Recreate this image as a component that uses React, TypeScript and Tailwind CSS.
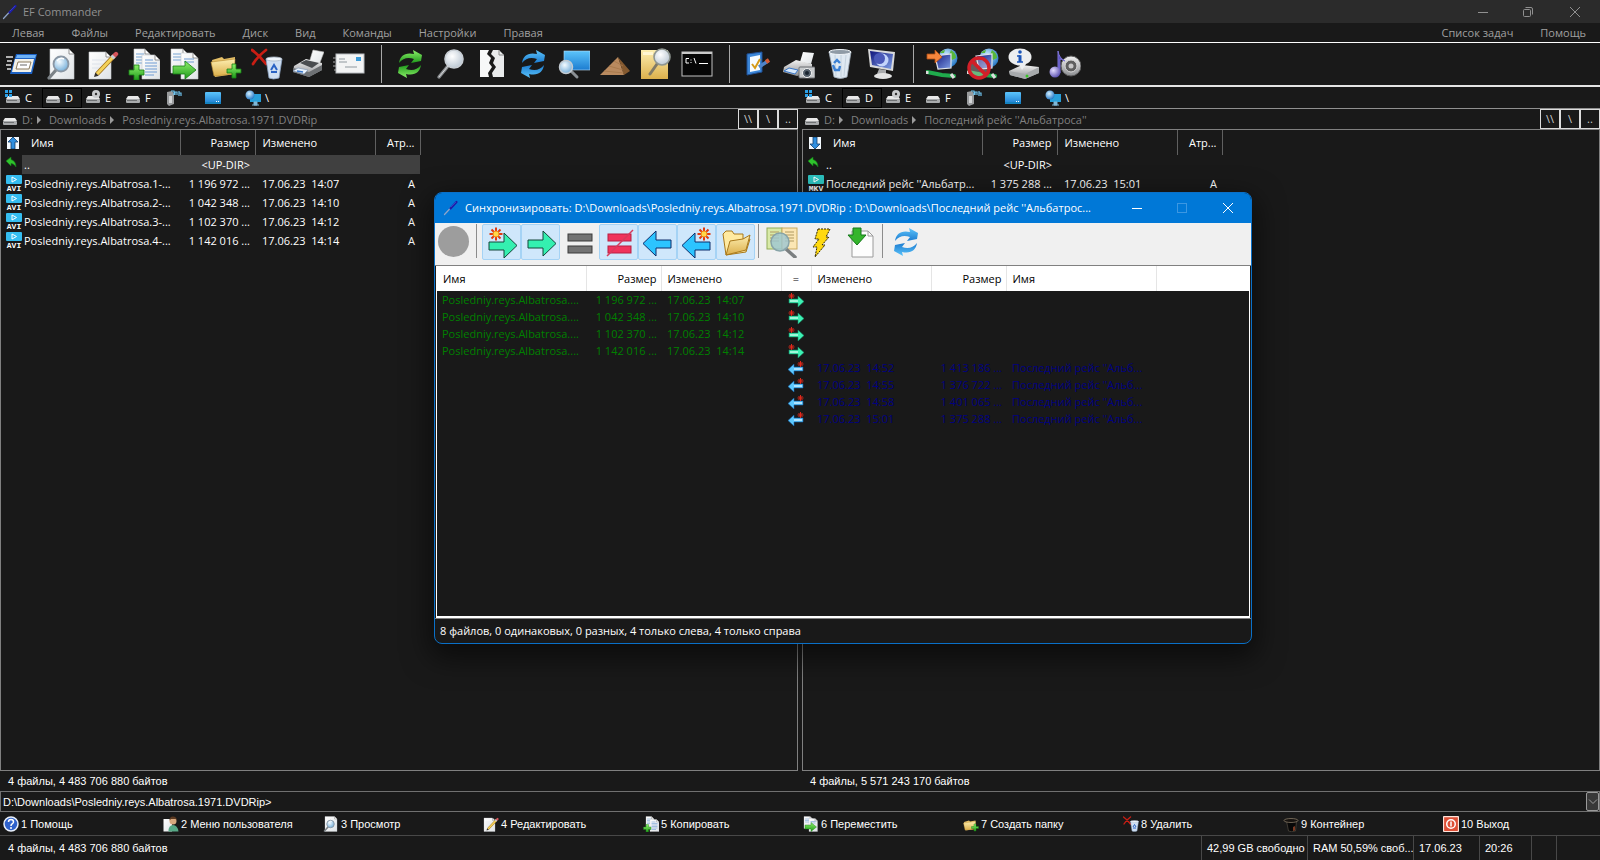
import React from 'react';

type Icon = () => React.ReactElement;

interface FileRow {
  name: string;
  size: string;
  date: string;
}

const leftFiles: FileRow[] = [
  { name: 'Posledniy.reys.Albatrosa.1-...', size: '1 196 972 ...', date: '17.06.23  14:07' },
  { name: 'Posledniy.reys.Albatrosa.2-...', size: '1 042 348 ...', date: '17.06.23  14:10' },
  { name: 'Posledniy.reys.Albatrosa.3-...', size: '1 102 370 ...', date: '17.06.23  14:12' },
  { name: 'Posledniy.reys.Albatrosa.4-...', size: '1 142 016 ...', date: '17.06.23  14:14' },
];

const rightFiles: FileRow[] = [
  { name: "Последний рейс ''Альбатр...", size: '1 375 288 ...', date: '17.06.23  15:01' },
];

const syncLeft: FileRow[] = [
  { name: 'Posledniy.reys.Albatrosa....', size: '1 196 972 ...', date: '17.06.23  14:07' },
  { name: 'Posledniy.reys.Albatrosa....', size: '1 042 348 ...', date: '17.06.23  14:10' },
  { name: 'Posledniy.reys.Albatrosa....', size: '1 102 370 ...', date: '17.06.23  14:12' },
  { name: 'Posledniy.reys.Albatrosa....', size: '1 142 016 ...', date: '17.06.23  14:14' },
];

const syncRight: FileRow[] = [
  { name: "Последний рейс ''Альб...", size: '1 413 186 ...', date: '17.06.23  14:52' },
  { name: "Последний рейс ''Альб...", size: '1 376 722 ...', date: '17.06.23  14:55' },
  { name: "Последний рейс ''Альб...", size: '1 401 065 ...', date: '17.06.23  14:58' },
  { name: "Последний рейс ''Альб...", size: '1 375 288 ...', date: '17.06.23  15:01' },
];

// Gradients shared by every icon
const Gradients = () => (
  <svg className="absolute h-0 w-0" aria-hidden="true">
    <defs>
      <linearGradient id="paper" x1="0" y1="0" x2="1" y2="1">
        <stop offset="0" stopColor="#ffffff" />
        <stop offset="1" stopColor="#dfe3e6" />
      </linearGradient>
      <linearGradient id="green" x1="0" y1="0" x2="0" y2="1">
        <stop offset="0" stopColor="#8df06a" />
        <stop offset="1" stopColor="#1f9a1b" />
      </linearGradient>
      <linearGradient id="blue" x1="0" y1="0" x2="0" y2="1">
        <stop offset="0" stopColor="#5cc4fb" />
        <stop offset="1" stopColor="#1c7cd0" />
      </linearGradient>
      <linearGradient id="folder" x1="0" y1="0" x2="0" y2="1">
        <stop offset="0" stopColor="#fdeeb0" />
        <stop offset="1" stopColor="#dcb04c" />
      </linearGradient>
      <linearGradient id="metal" x1="0" y1="0" x2="0" y2="1">
        <stop offset="0" stopColor="#f2f2f2" />
        <stop offset="1" stopColor="#8b8d90" />
      </linearGradient>
      <linearGradient id="night" x1="0" y1="0" x2="1" y2="1">
        <stop offset="0" stopColor="#10157c" />
        <stop offset="1" stopColor="#7f9fe6" />
      </linearGradient>
      <radialGradient id="lens" cx="0.4" cy="0.35" r="0.7">
        <stop offset="0" stopColor="#f4fbff" />
        <stop offset="1" stopColor="#6fabd8" />
      </radialGradient>
      <radialGradient id="glass" cx="0.4" cy="0.35" r="0.7">
        <stop offset="0" stopColor="#ffffff" />
        <stop offset="1" stopColor="#b9c6d2" />
      </radialGradient>
      <radialGradient id="globe" cx="0.4" cy="0.35" r="0.7">
        <stop offset="0" stopColor="#d3efff" />
        <stop offset="1" stopColor="#1e73c4" />
      </radialGradient>
      <radialGradient id="note" cx="0.35" cy="0.35" r="0.7">
        <stop offset="0" stopColor="#e3dcff" />
        <stop offset="1" stopColor="#5a4fb0" />
      </radialGradient>
    </defs>
  </svg>
);

const Svg = ({ children }: { children: React.ReactNode }) => (
  <svg viewBox="0 0 32 32" className="h-full w-full" aria-hidden="true">{children}</svg>
);

const PenIcon: Icon = () => (
  <Svg>
    <path d="M3 29L17 14" stroke="#8fa4c8" strokeWidth="2.5" strokeLinecap="round" />
    <path d="M15 17L27 4" stroke="#1c1ca8" strokeWidth="4.5" strokeLinecap="round" />
    <path d="M16 14L26 4" stroke="#4a55d0" strokeWidth="1.2" />
  </Svg>
);

const MenuWindowIcon: Icon = () => (
  <Svg>
    <path d="M1 9h7M2 13h5M1 17h5M2 21h4" stroke="#e4e4e4" strokeWidth="1.4" />
    <path d="M11 6H32L27 26H5Z" fill="#1d62c4" />
    <path d="M12 7H31L30 10H11Z" fill="#6db1f5" />
    <path d="M10 11H29L26 24H7Z" fill="#f3f1e8" />
    <path d="M13 14H26L24 21H11Z" fill="#ffffff" stroke="#8c7c60" />
    <path d="M15 17h7" stroke="#9a9a9a" strokeWidth="1.5" />
  </Svg>
);

const Sheet = ({ x = 4, y = 1, w = 24, h = 30 }: { x?: number; y?: number; w?: number; h?: number }) => (
  <g>
    <path d={`M${x} ${y}h${w - 5}l5 5v${h - 5}h-${w}z`} fill="url(#paper)" stroke="#c6c9cc" strokeWidth="0.6" />
    <path d={`M${x + w - 5} ${y}v5h5z`} fill="#fff" stroke="#777" strokeWidth="0.8" />
  </g>
);

const ViewIcon: Icon = () => (
  <Svg>
    <Sheet x={4} />
    <path d="M10 22L3 30" stroke="#7c8287" strokeWidth="3.2" strokeLinecap="round" />
    <circle cx="15" cy="16" r="7.5" fill="url(#lens)" stroke="#8a96a3" strokeWidth="1.8" />
    <path d="M11 13q3-4 7-2" stroke="#fff" strokeWidth="1.4" fill="none" />
  </Svg>
);

const EditIcon: Icon = () => (
  <Svg>
    <Sheet x={2} y={4} w={22} h={27} />
    <path d="M5 12h14M5 16h12M5 20h9" stroke="#dde2ea" />
    <path d="M10 26L27 8" stroke="#a2741e" strokeWidth="4.6" />
    <path d="M10 26L27 8" stroke="#f4d25a" strokeWidth="3" />
    <path d="M27 8L29 6" stroke="#d5545a" strokeWidth="4.4" strokeLinecap="round" />
    <path d="M25 10L27 8" stroke="#c7ccd2" strokeWidth="4.4" />
    <path d="M8.300 24.500L11.700 27.700L7 29z" fill="#33302a" />
  </Svg>
);

const TwoSheets = () => (
  <g>
    <Sheet x={6} y={1} w={16} h={23} />
    <path d="M8 6h8M8 9h11M8 12h6M8 15h6" stroke="#79a5d6" strokeWidth="1.2" />
    <Sheet x={14} y={7} w={18} h={24} />
    <path d="M17 12h8M17 15h12M17 18h12M17 21h12M17 24h12M17 27h9" stroke="#6e9cd3" strokeWidth="1.2" />
  </g>
);

const CopyIcon: Icon = () => (
  <Svg>
    <TwoSheets />
    <path d="M6 17h5v5h5v5h-5v5H6v-5H1v-5h5z" fill="url(#green)" stroke="#187d15" strokeWidth="0.8" />
  </Svg>
);

const MoveIcon: Icon = () => (
  <Svg>
    <Sheet x={2} y={1} w={17} h={24} />
    <path d="M4 6h9M4 9h9M4 12h9" stroke="#79a5d6" strokeWidth="1.2" />
    <Sheet x={12} y={5} w={17} h={26} />
    <path d="M15 11h10M15 14h10" stroke="#6e9cd3" strokeWidth="1.2" />
    <path d="M4 18H16V13L27 22L16 31V26H4Z" fill="url(#green)" stroke="#187d15" strokeWidth="0.8" />
  </Svg>
);

const NewFolderIcon: Icon = () => (
  <Svg>
    <path d="M2 12L12 9L14 11L25 9V26L5 29Z" fill="#e5c068" />
    <path d="M1 14L25 11L24 26L4 28Z" fill="url(#folder)" stroke="#b98c30" strokeWidth="0.6" />
    <path d="M22 16h4v5h5v4h-5v5h-4v-5h-5v-4h5z" fill="url(#green)" stroke="#187d15" strokeWidth="0.8" />
  </Svg>
);

const DeleteIcon: Icon = () => (
  <Svg>
    <path d="M1 2Q8 7 15 16M15 2Q7 8 2 16" stroke="#c91e14" strokeWidth="2.8" fill="none" strokeLinecap="round" />
    <path d="M15 11L31 11L28 30Q22 32 18 30Z" fill="#cfdff2" stroke="#8aa2c0" strokeWidth="0.8" />
    <ellipse cx="23" cy="11" rx="8" ry="2" fill="#eef5fc" stroke="#a9b7c7" strokeWidth="0.8" />
    <path d="M20 22l3-5 3 5M26 24h-6" stroke="#2a63c4" strokeWidth="2" fill="none" />
  </Svg>
);

const PrintIcon: Icon = () => (
  <Svg>
    <path d="M17 15L21 2L32 4L27 17Z" fill="url(#paper)" stroke="#bbb" strokeWidth="0.6" />
    <path d="M2 18L14 11L30 15V22L17 29L1 24Z" fill="url(#metal)" />
    <path d="M8 15L14 12L27 15L20 20Z" fill="#4a4d50" />
    <path d="M1 20L17 24L30 17V22L17 29L1 24Z" fill="#6d7073" />
    <path d="M1 23L12 26L16 22L6 20Z" fill="#e9f2fc" stroke="#7a92b0" strokeWidth="0.6" />
    <path d="M5 23l6 1" stroke="#3a77c8" strokeWidth="1.5" />
  </Svg>
);

const MailIcon: Icon = () => (
  <Svg>
    <rect x="3" y="6" width="28" height="19" fill="#f3f4f4" stroke="#b8bcc0" />
    <rect x="23" y="9" width="5" height="4" fill="#3b9bd8" />
    <path d="M6 11h6M6 14h8M12 19h12" stroke="#8f989e" strokeWidth="1.2" />
    <path d="M0 10h3M0 14h2M0 18h3M1 22h2" stroke="#aaa" />
  </Svg>
);

const syncPath = 'M5 15C6 8 11 4 20 6L19 2L28 7L27 13L17 15L20 11C14 9 9 10 5 15Z';

const SyncGreenIcon: Icon = () => (
  <Svg>
    <path d={syncPath} fill="url(#green)" />
    <path d={syncPath} fill="url(#green)" transform="rotate(180 16 16)" />
  </Svg>
);

const SyncBlueIcon: Icon = () => (
  <Svg>
    <path d={syncPath} fill="url(#blue)" />
    <path d={syncPath} fill="url(#blue)" transform="rotate(180 16 16)" />
  </Svg>
);

const SearchIcon: Icon = () => (
  <Svg>
    <path d="M13 18L4 29" stroke="#8a8d90" strokeWidth="3.4" strokeLinecap="round" />
    <path d="M13 18L4 29" stroke="#d6d8da" strokeWidth="1" />
    <circle cx="19" cy="11" r="9" fill="url(#glass)" stroke="#c8ced4" strokeWidth="1.6" />
  </Svg>
);

const SplitIcon: Icon = () => (
  <Svg>
    <path d="M4 2H13L11 6L15 10L13 15L16 19L12 25L13 29H4Z" fill="#f7f8f8" />
    <path d="M17 2H23L28 7V29H17L16 25L20 19L17 15L19 10L15 6Z" fill="#e9ebec" />
    <path d="M23 2v5h5" fill="none" stroke="#888" />
  </Svg>
);

const ScreenSearchIcon: Icon = () => (
  <Svg>
    <rect x="6" y="3" width="26" height="19" fill="url(#blue)" stroke="#b7dcf7" strokeWidth="0.6" />
    <path d="M12 22L19 29" stroke="#8b9094" strokeWidth="3" strokeLinecap="round" />
    <circle cx="8" cy="19" r="6.500" fill="url(#lens)" stroke="#c3cbd2" strokeWidth="1.5" />
  </Svg>
);

const PyramidIcon: Icon = () => (
  <Svg>
    <path d="M19 9L1 27H25Z" fill="#b98a5f" />
    <path d="M19 9L25 27L31 23Z" fill="#84592f" />
    <path d="M15 13L24 18M10 18L24 22M5 23L25 25" stroke="#a57649" strokeWidth="0.8" />
  </Svg>
);

const FolderSearchIcon: Icon = () => (
  <Svg>
    <rect x="1" y="2" width="27" height="29" fill="url(#folder)" />
    <rect x="3" y="4" width="10" height="3" fill="#fff6d2" />
    <path d="M17 16L10 26" stroke="#817a66" strokeWidth="3" strokeLinecap="round" />
    <circle cx="22" cy="9" r="8" fill="url(#glass)" stroke="#8f9691" strokeWidth="1.600" />
  </Svg>
);

const ConsoleIcon: Icon = () => (
  <Svg>
    <rect x="1" y="4" width="30" height="24" fill="#060606" stroke="#c2c2c2" />
    <rect x="1" y="4" width="30" height="2" fill="#c9c9c9" />
    <path d="M8 10.500H5V15H8M10 11.500v1M10 14v1M13 10L15 15.500M18 15.500h9" stroke="#fff" fill="none" />
  </Svg>
);

const TasksIcon: Icon = () => (
  <Svg>
    <path d="M5 6L20 4V24L5 27Z" fill="#3b86d8" stroke="#1f4f94" />
    <path d="M8 9L18 7V22L8 24Z" fill="#f6fbff" />
    <path d="M10 16l3 4 5-9" fill="none" stroke="#d59a18" strokeWidth="2" />
    <path d="M17 19L26 13" stroke="#4e83c8" strokeWidth="3.500" />
    <path d="M24 14L27 12" stroke="#d45a34" strokeWidth="4" />
  </Svg>
);

const PrintScreenIcon: Icon = () => (
  <Svg>
    <path d="M17 14L20 4L31 5L28 16Z" fill="url(#paper)" />
    <path d="M1 19L13 12L29 16V23L14 28L0 24Z" fill="url(#metal)" />
    <path d="M1 23L12 26L15 22L6 20Z" fill="#d9eafc" stroke="#3a77c8" />
    <rect x="16" y="19" width="16" height="11" rx="1" fill="#c7cacc" stroke="#6c6f72" />
    <circle cx="24" cy="25" r="4.500" fill="#55606b" stroke="#f1f1f1" />
    <circle cx="24" cy="25" r="2" fill="#1a2430" />
  </Svg>
);

const BinIcon: Icon = () => (
  <Svg>
    <path d="M5 4H27L23 29Q16 32 10 29Z" fill="#dfe9f2" stroke="#9eabb8" strokeWidth="0.8" />
    <ellipse cx="16" cy="4" rx="11" ry="2.500" fill="#8f9ba6" stroke="#eef3f7" />
    <path d="M11 7L12 28M17 7V29M22 7L20 28" stroke="#bccbd8" strokeWidth="0.8" />
    <path d="M10 15l3-3 3 3M16 18l-1 4h-4l-2-5" stroke="#3b80d4" strokeWidth="2.400" fill="none" />
  </Svg>
);

const MonitorNightIcon: Icon = () => (
  <Svg>
    <path d="M3 1L30 4L28 23L5 19Z" fill="#d9dadb" />
    <path d="M5 3L28 6L26 21L7 17Z" fill="url(#night)" />
    <circle cx="17" cy="12" r="6.500" fill="#c3d4fb" />
    <circle cx="14.500" cy="10.500" r="5.500" fill="#4a58b8" />
    <path d="M14 21L21 22V26H12Z" fill="#a9abad" />
    <ellipse cx="18" cy="28" rx="9" ry="3" fill="#e3e4e4" />
  </Svg>
);

const NetCable = () => (
  <g>
    <circle cx="22" cy="10" r="9.500" fill="url(#globe)" />
    <path d="M25 2q5 3 5 8l-4 2-3-5zM14 5q2-3 5-3l-1 3z" fill="#57b83c" />
    <path d="M9 8L25 6V20L12 21Z" fill="url(#night)" stroke="#e1e5ea" strokeWidth="1.200" />
    <path d="M1 24L16 27L28 28" stroke="#1faa4c" strokeWidth="4" fill="none" strokeLinecap="round" />
    <path d="M1 23v3M25 26l3 4" stroke="#dcdcdc" strokeWidth="3" />
  </g>
);

const ConnectIcon: Icon = () => (
  <Svg>
    <NetCable />
    <path d="M1 6H9V2L16 9L9 15V11H1Z" fill="#f5853c" stroke="#b24f12" strokeWidth="0.8" />
  </Svg>
);

const DisconnectIcon: Icon = () => (
  <Svg>
    <NetCable />
    <circle cx="12" cy="20" r="10" fill="#f3dada" fillOpacity="0.35" stroke="#d21f28" strokeWidth="3.500" />
    <path d="M5 13L19 27" stroke="#d21f28" strokeWidth="3.500" />
  </Svg>
);

const DiskInfoIcon: Icon = () => (
  <Svg>
    <path d="M1 23L14 17L31 19V25L17 31L2 27Z" fill="url(#metal)" />
    <path d="M1 23L17 26L31 19V25L17 31L2 27Z" fill="#a7aaac" />
    <circle cx="19" cy="28" r="1.500" fill="#3ac42a" />
    <path d="M11 16L14 22L18 16Z" fill="#eceef0" />
    <ellipse cx="12" cy="9" rx="11.500" ry="8.500" fill="#eceef0" />
    <circle cx="12" cy="4" r="1.800" fill="#1b55b8" />
    <path d="M9 8h3M9 14h6" stroke="#1b55b8" strokeWidth="1.600" />
    <path d="M12 7.200V14" stroke="#1b55b8" strokeWidth="3" />
  </Svg>
);

const SoundIcon: Icon = () => (
  <Svg>
    <path d="M19 10L14 15V23L19 28Z" fill="#8d8a80" />
    <circle cx="22" cy="18" r="10" fill="url(#metal)" stroke="#5c5c5c" />
    <circle cx="22" cy="18" r="6" fill="#5f5f5f" stroke="#d8d8d8" />
    <circle cx="22" cy="18" r="2.500" fill="#c8c8c8" />
    <path d="M9 25V3Q10 10 16 13Q12 11 11 11V25Z" fill="#5c53bf" stroke="#7c73d8" />
    <circle cx="6" cy="24" r="5.500" fill="url(#note)" />
  </Svg>
);

// Function key icons that have no big counterpart
const HelpIcon: Icon = () => (
  <Svg>
    <circle cx="16" cy="16" r="14" fill="#2f62cc" stroke="#e9f0fb" strokeWidth="3" />
    <path d="M11 12q0-5 5-5t5 5q0 2-3 4-2 1-2 4" stroke="#fff" strokeWidth="3" fill="none" />
    <circle cx="16" cy="24" r="2" fill="#fff" />
  </Svg>
);

const UserMenuIcon: Icon = () => (
  <Svg>
    <path d="M1 6L18 6V31H1Z" fill="url(#paper)" />
    <circle cx="20" cy="10" r="7" fill="#d8a87e" />
    <path d="M13 9q0-8 7-8t8 8l-3-3h-9z" fill="#5b3920" />
    <path d="M11 31q0-13 9-13t11 13z" fill="#57a886" />
  </Svg>
);

const HatIcon: Icon = () => (
  <Svg>
    <path d="M7 10H27L25 30Q17 33 11 30Z" fill="#080808" stroke="#6d6354" />
    <ellipse cx="16" cy="9" rx="14" ry="4" fill="#171310" stroke="#8b7e6a" strokeWidth="1.500" />
    <path d="M20 22L24 20V29L20 30Z" fill="#7d3a22" />
  </Svg>
);

const ExitIcon: Icon = () => (
  <Svg>
    <rect x="1" y="1" width="30" height="30" rx="2" fill="#dd4f36" stroke="#ffe4da" strokeWidth="2.500" />
    <circle cx="16" cy="16" r="8.500" fill="none" stroke="#fff" strokeWidth="3" />
    <path d="M16 11v10" stroke="#fff" strokeWidth="3" />
  </Svg>
);

// Sync window icons
const Burst = ({ x, y }: { x: number; y: number }) => (
  <g transform={`translate(${x} ${y})`}>
    <path d="M0-6.500V6.500M-6.500 0H6.500M-4.500-4.500L4.500 4.500M-4.500 4.500L4.500-4.500" stroke="#e23a12" strokeWidth="2" />
    <circle r="3" fill="#ffd84a" stroke="#f08a1a" />
  </g>
);

const rightArrow = 'M3 14H18V5L31 17.500L18 30V22H3Z';
const leftArrow = 'M29 14H14V5L1 17.500L14 30V22H29Z';

const NewRightIcon: Icon = () => (
  <Svg>
    <path d={rightArrow} transform="translate(0 2)" fill="#34f0b0" stroke="#14463a" />
    <Burst x={10} y={8} />
  </Svg>
);
const RightIcon: Icon = () => (
  <Svg><path d={rightArrow} fill="#34f0b0" stroke="#14463a" /></Svg>
);
const EqualIcon: Icon = () => (
  <Svg>
    <rect x="4" y="8" width="24" height="7" fill="#747474" stroke="#3b3b3b" />
    <rect x="4" y="20" width="24" height="7" fill="#747474" stroke="#3b3b3b" />
  </Svg>
);
const NotEqualIcon: Icon = () => (
  <Svg>
    <rect x="5" y="8" width="23" height="7" fill="#f0345c" stroke="#b81f42" />
    <rect x="5" y="20" width="23" height="7" fill="#f0345c" stroke="#b81f42" />
    <path d="M4 30L30 4" stroke="#d83a5c" strokeWidth="1.500" />
  </Svg>
);
const LeftIcon: Icon = () => (
  <Svg><path d={leftArrow} fill="#2cc4ff" stroke="#0d2c6a" /></Svg>
);
const NewLeftIcon: Icon = () => (
  <Svg>
    <path d={leftArrow} transform="translate(0 2)" fill="#2cc4ff" stroke="#0d2c6a" />
    <Burst x={23} y={8} />
  </Svg>
);
const OpenFolderIcon: Icon = () => (
  <Svg>
    <path d="M3 8L6 5H12L14 8H23V13H30L26 26L6 29Z" fill="#ffeaa0" stroke="#a8781a" />
    <path d="M6 29L10 15L23 13L30 9L26 24Z" fill="url(#folder)" stroke="#a8781a" />
  </Svg>
);
const CompareIcon: Icon = () => (
  <Svg>
    <rect x="1" y="2" width="15" height="21" fill="#d9eaa8" stroke="#92ab58" />
    <rect x="16" y="2" width="15" height="21" fill="#fbe6b4" stroke="#c9a95e" />
    <path d="M4 6h9M4 9h9M4 12h9M4 15h9M19 6h9M19 9h9M19 12h9M19 15h9" stroke="#b09a62" />
    <path d="M20 23L29 31" stroke="#7b7f80" strokeWidth="3.500" strokeLinecap="round" />
    <circle cx="14" cy="16" r="9" fill="#9cc5d2" fillOpacity="0.8" stroke="#88a4a8" strokeWidth="1.500" />
  </Svg>
);
const BoltIcon: Icon = () => (
  <Svg>
    <path d="M13 3H25L21 11H24L17 19H20L10 31L12 21H8L14 13H10Z" fill="#ffd90f" stroke="#2a2203" strokeDasharray="2 1" />
  </Svg>
);
const SaveListIcon: Icon = () => (
  <Svg>
    <path d="M8 5H24L29 10V31H8Z" fill="#fdfdfd" stroke="#9a9a9a" />
    <path d="M24 5v5h5" fill="none" stroke="#9a9a9a" />
    <path d="M9 2H17V9H22L13 19L4 9H9Z" fill="#35b52c" stroke="#14781a" />
  </Svg>
);

const toolbar: { label: string; icon: Icon }[][] = [
  [
    { label: 'Меню', icon: MenuWindowIcon },
    { label: 'Просмотр', icon: ViewIcon },
    { label: 'Редактировать', icon: EditIcon },
    { label: 'Копировать', icon: CopyIcon },
    { label: 'Переместить', icon: MoveIcon },
    { label: 'Создать папку', icon: NewFolderIcon },
    { label: 'Удалить', icon: DeleteIcon },
    { label: 'Печать', icon: PrintIcon },
    { label: 'Почта', icon: MailIcon },
  ],
  [
    { label: 'Обновить', icon: SyncGreenIcon },
    { label: 'Поиск', icon: SearchIcon },
    { label: 'Разделить', icon: SplitIcon },
    { label: 'Синхронизировать', icon: SyncBlueIcon },
    { label: 'Сеть', icon: ScreenSearchIcon },
    { label: 'Архив', icon: PyramidIcon },
    { label: 'Поиск в папке', icon: FolderSearchIcon },
    { label: 'Консоль', icon: ConsoleIcon },
  ],
  [
    { label: 'Задачи', icon: TasksIcon },
    { label: 'Снимок экрана', icon: PrintScreenIcon },
    { label: 'Корзина', icon: BinIcon },
    { label: 'Заставка', icon: MonitorNightIcon },
  ],
  [
    { label: 'Подключить', icon: ConnectIcon },
    { label: 'Отключить', icon: DisconnectIcon },
    { label: 'О диске', icon: DiskInfoIcon },
    { label: 'Звук', icon: SoundIcon },
  ],
];

const syncTools: { label: string; icon: Icon; on?: boolean }[] = [
  { label: 'Новые слева', icon: NewRightIcon, on: true },
  { label: 'Слева направо', icon: RightIcon, on: true },
  { label: 'Одинаковые', icon: EqualIcon },
  { label: 'Разные', icon: NotEqualIcon, on: true },
  { label: 'Справа налево', icon: LeftIcon, on: true },
  { label: 'Новые справа', icon: NewLeftIcon, on: true },
  { label: 'Папки', icon: OpenFolderIcon, on: true },
];

const functionKeys: { label: string; icon: Icon }[] = [
  { label: '1 Помощь', icon: HelpIcon },
  { label: '2 Меню пользователя', icon: UserMenuIcon },
  { label: '3 Просмотр', icon: ViewIcon },
  { label: '4 Редактировать', icon: EditIcon },
  { label: '5 Копировать', icon: CopyIcon },
  { label: '6 Переместить', icon: MoveIcon },
  { label: '7 Создать папку', icon: NewFolderIcon },
  { label: '8 Удалить', icon: DeleteIcon },
  { label: '9 Контейнер', icon: HatIcon },
  { label: '10 Выход', icon: ExitIcon },
];

const menus = ['Левая', 'Файлы', 'Редактировать', 'Диск', 'Вид', 'Команды', 'Настройки', 'Правая'];

const DriveIcon = ({ badge }: { badge?: 'win' | 'cd' }) => (
  <svg viewBox="0 0 16 16" className="h-4 w-4 shrink-0" aria-hidden="true">
    <path d="M3 6H13L15 9H1Z" fill="#e8e8e8" />
    <rect x="1" y="9" width="14" height="4" rx="1" fill="#a9abad" />
    <rect x="2" y="10" width="10" height="1" fill="#6f7173" />
    {badge === 'win' && <path d="M0 0h3v3H0zM4 0h3v3H4zM0 4h3v3H0zM4 4h3v3H4z" fill="#2da0e6" />}
    {badge === 'cd' && (
      <g>
        <circle cx="11" cy="4" r="4" fill="#c9cbcd" />
        <circle cx="11" cy="4" r="1.200" fill="#333" />
      </g>
    )}
  </svg>
);

const DriveBar = ({ side }: { side: string }) => (
  <nav aria-label={`Диски ${side}`} className="flex h-[21px] items-center pl-0.5 text-white">
    {(['C', 'D', 'E', 'F'] as const).map(d => (
      <button
        key={d}
        className={`flex h-5 w-10 items-center gap-1 border pl-0.5 ${d === 'D' ? 'border-black' : 'border-transparent'}`}
      >
        <DriveIcon badge={d === 'C' ? 'win' : d === 'E' ? 'cd' : undefined} />
        {d}
      </button>
    ))}
    <button aria-label="Устройства" className="flex h-5 w-10 items-center pl-1">
      <svg viewBox="0 0 16 16" className="h-4 w-4" aria-hidden="true">
        <path d="M1 2L6 1L8 4V14L3 16L1 14Z" fill="#9a9c9e" />
        <path d="M3 6h3v7H3z" fill="#d4d6d8" />
        <path d="M5 1h3v4M9 5V2h2v3M13 1v5M13 3h2v3" stroke="#6fc3ee" strokeWidth="1.200" fill="none" />
      </svg>
    </button>
    <button aria-label="Рабочий стол" className="flex h-5 w-10 items-center pl-[3px]">
      <svg viewBox="0 0 16 16" className="h-4 w-4" aria-hidden="true">
        <rect x="0" y="2" width="16" height="12" rx="1" fill="url(#blue)" />
        <path d="M0 12h16v2H0z" fill="#1482c0" />
        <path d="M11 11.500h1M13 11.500h1" stroke="#fff" />
      </svg>
    </button>
    <button className="flex h-5 items-center gap-1 pl-[3px]">
      <svg viewBox="0 0 16 16" className="h-4 w-4" aria-hidden="true">
        <rect x="5" y="4" width="11" height="8" fill="#2a9fd8" />
        <path d="M9 12h3v3H9zM7 15h7" fill="#7fb8d8" stroke="#7fb8d8" />
        <circle cx="5" cy="5" r="4.500" fill="url(#globe)" />
      </svg>
      {'\\'}
    </button>
  </nav>
);

const Chevron = () => (
  <svg viewBox="0 0 4 8" className="h-2 w-1 shrink-0" aria-hidden="true"><path d="M0 0L4 4L0 8Z" fill="#9a9a9a" /></svg>
);

const FileBadge = ({ type }: { type: string }) => (
  <span className="flex h-[19px] w-4 shrink-0 flex-col items-center pt-px">
    <svg viewBox="0 0 16 9" className="h-[9px] w-4 shrink-0" aria-hidden="true">
      <rect width="16" height="9" rx="1" fill={type === 'AVI' ? '#35bdf0' : '#2cc3c0'} />
      <path d="M6 2L10.500 4.500L6 7Z" fill="none" stroke="#fff" />
    </svg>
    <span className="font-['Liberation_Mono',monospace] text-[8px] leading-[9px] font-bold">{type}</span>
  </span>
);

interface PanelProps {
  folder: string;
  type: string;
  files: FileRow[];
  down?: boolean;
  selected?: boolean;
  total: string;
}

const FilePanel = ({ folder, type, files, down, selected, total }: PanelProps) => (
  <section className="flex min-w-0 flex-1 flex-col">
    <div className="flex h-5 items-center text-[#808080]">
      <nav aria-label="Путь" className="flex min-w-0 flex-1 items-center gap-1 pt-px pl-0.5">
        <DriveIcon />
        <a href="#drive">D:</a>
        <Chevron />
        <a href="#downloads" className="ml-1">Downloads</a>
        <Chevron />
        <a href="#folder" className="ml-1">{folder}</a>
      </nav>
      {['\\\\', '\\', '..'].map(b => (
        <button key={b} className="h-5 w-5 border border-[#dcdcdc] leading-4 text-[#d0d0d0]">{b}</button>
      ))}
    </div>
    <div className="flex-1 border border-[#808080]">
      <table className="w-[419px] table-fixed border-collapse text-white">
        <colgroup>
          <col className="w-[179px]" />
          <col className="w-[75px]" />
          <col className="w-[120px]" />
          <col className="w-[45px]" />
        </colgroup>
        <thead>
          <tr className="h-[25px] whitespace-nowrap text-left">
            <th className="border-r border-[#606060] p-0 font-normal">
              <span className="flex items-center gap-3 pl-1.5">
                <svg viewBox="0 0 12 12" className={`h-3 w-3 ${down ? 'rotate-180' : ''}`} aria-hidden="true">
                  <rect width="12" height="12" fill="#f2f8fd" />
                  <path d="M6 0L11 5H8V12H4V5H1Z" fill="#2f8fe0" stroke="#123c6a" strokeWidth="0.800" />
                </svg>
                Имя
              </span>
            </th>
            <th className="border-r border-[#606060] p-0 pr-[5px] text-right font-normal">Размер</th>
            <th className="border-r border-[#606060] p-0 pl-[7px] font-normal">Изменено</th>
            <th className="border-r border-[#606060] p-0 pr-[5px] text-right font-normal">Атр...</th>
          </tr>
        </thead>
        <tbody>
          <tr className="h-[19px] whitespace-nowrap">
            <td className="p-0">
              <span className="flex h-[19px] pl-[5px]">
                <svg viewBox="0 0 11 11" className="mt-0.5 mr-[5px] h-[11px] w-[11px]" aria-hidden="true">
                  <path d="M0 4L5 0V2.500Q10 4 10 10Q8 6.500 5 6.500V9Z" fill="#2fc42c" stroke="#14771a" strokeWidth="0.600" />
                </svg>
                <span className={`flex-1 pt-0.5 pl-0.5 ${selected ? 'bg-[#404040]' : ''}`}>..</span>
              </span>
            </td>
            <td className={`p-0 pr-[5px] text-right ${selected ? 'bg-[#404040]' : ''}`}>&lt;UP-DIR&gt;</td>
            <td className={selected ? 'bg-[#404040]' : ''} />
            <td className={selected ? 'bg-[#404040]' : ''} />
          </tr>
          {files.map(f => (
            <tr key={f.name} className="h-[19px] whitespace-pre">
              <td className="p-0">
                <span className="flex h-[19px] items-center gap-0.5 pl-[5px]">
                  <FileBadge type={type} />
                  {f.name}
                </span>
              </td>
              <td className="p-0 pr-[5px] text-right">{f.size}</td>
              <td className="p-0 pl-[7px]">{f.date}</td>
              <td className="p-0 pr-[5px] text-right">A</td>
            </tr>
          ))}
        </tbody>
      </table>
    </div>
    <div className="flex h-5 items-center pl-2 font-['Liberation_Sans',sans-serif] text-white">{total}</div>
  </section>
);

const SmallArrow = ({ left }: { left?: boolean }) => (
  <svg viewBox="0 0 16 16" className="mx-auto h-4 w-4" aria-hidden="true">
    {left ? (
      <g>
        <path d="M15 7H6V4L0 9.500L6 15V11H15Z" fill="#5cc9ff" stroke="#1560a8" strokeWidth="0.600" />
        <path d="M6 9H14" stroke="#fff" />
        <path d="M9.500 4H15.500M12.500 1V7M10.500 2L14.500 6M10.500 6L14.500 2" stroke="#e0281a" />
      </g>
    ) : (
      <g>
        <path d="M1 7H10V4L16 9.500L10 15V11H1Z" fill="#3df2b4" stroke="#178864" strokeWidth="0.600" />
        <path d="M2 9H10" stroke="#fff" />
        <path d="M0.500 4H6.500M3.500 1V7M1.500 2L5.500 6M1.500 6L5.500 2" stroke="#e0281a" />
      </g>
    )}
  </svg>
);

const SyncButton = ({ label, icon: Pic, on }: { label: string; icon: Icon; on?: boolean }) => (
  <button
    aria-label={label}
    className={`flex h-9 w-[39px] items-center justify-center rounded-xs border ${on ? 'border-[#a5d3f5] bg-[#cfe7fb]' : 'border-transparent'}`}
  >
    <span className="h-8 w-8"><Pic /></span>
  </button>
);

const SyncWindow = () => (
  <div
    role="dialog"
    aria-label="Синхронизировать"
    className="absolute top-[192px] left-[434px] flex h-[452px] w-[818px] flex-col overflow-hidden rounded-lg border border-[#0a70c8] bg-[#191919] shadow-[0_10px_28px_4px_rgba(0,0,0,0.55)]"
  >
    <div className="flex h-[30px] items-center bg-[#0078d7] text-white">
      <span className="mr-1.5 ml-2 h-4 w-4"><PenIcon /></span>
      <h2 className="min-w-0 flex-1 overflow-hidden whitespace-nowrap">
        Синхронизировать: D:\Downloads\Posledniy.reys.Albatrosa.1971.DVDRip : D:\Downloads\Последний рейс ''Альбатрос...
      </h2>
      <button aria-label="Свернуть" className="flex h-full w-[45px] items-center justify-center">
        <svg viewBox="0 0 10 10" className="h-2.5 w-2.5"><path d="M0 5.500H10" stroke="#fff" /></svg>
      </button>
      <button aria-label="Развернуть" disabled className="flex h-full w-[45px] items-center justify-center">
        <svg viewBox="0 0 10 10" className="h-2.5 w-2.5"><rect x="0.500" y="0.500" width="9" height="9" fill="none" stroke="#3c97e2" /></svg>
      </button>
      <button aria-label="Закрыть" className="flex h-full w-[47px] items-center justify-center">
        <svg viewBox="0 0 10 10" className="h-2.5 w-2.5"><path d="M0 0L10 10M10 0L0 10" stroke="#fff" /></svg>
      </button>
    </div>
    <div className="flex h-[43px] items-start border-b border-[#808080] bg-[#f0f0f0] pt-px">
      <button aria-label="Стоп" className="mt-0.5 ml-[3px] h-[31px] w-[31px] rounded-full bg-[#9d9d9d]" />
      <span className="mr-[5px] ml-[7px] h-[34px] w-px bg-[#8c8c8c]" />
      {syncTools.map(t => <SyncButton key={t.label} {...t} />)}
      <span className="mx-[3px] h-[34px] w-px bg-[#8c8c8c]" />
      <SyncButton label="Сравнить" icon={CompareIcon} />
      <SyncButton label="Запустить" icon={BoltIcon} />
      <SyncButton label="Сохранить список" icon={SaveListIcon} />
      <span className="mx-[3px] h-[34px] w-px bg-[#8c8c8c]" />
      <SyncButton label="Обновить" icon={SyncBlueIcon} />
    </div>
    <div className="mx-px flex-1 border border-t-0 border-b-2 border-white">
      <table className="w-full table-fixed border-collapse">
        <colgroup>
          <col className="w-[149px]" />
          <col className="w-[75px]" />
          <col className="w-[120px]" />
          <col className="w-[30px]" />
          <col className="w-[120px]" />
          <col className="w-[75px]" />
          <col className="w-[150px]" />
          <col />
        </colgroup>
        <thead>
          <tr className="h-[25px] bg-white text-left text-black">
            <th className="border-r border-[#e5e5e5] p-0 pl-1.5 font-normal">Имя</th>
            <th className="border-r border-[#e5e5e5] p-0 pr-1 text-right font-normal">Размер</th>
            <th className="border-r border-[#e5e5e5] p-0 pl-1.5 font-normal">Изменено</th>
            <th className="border-r border-[#e5e5e5] p-0 text-center font-normal">=</th>
            <th className="border-r border-[#e5e5e5] p-0 pl-1.5 font-normal">Изменено</th>
            <th className="border-r border-[#e5e5e5] p-0 pr-1 text-right font-normal">Размер</th>
            <th className="border-r border-[#e5e5e5] p-0 pl-1.5 font-normal">Имя</th>
            <th className="p-0" />
          </tr>
        </thead>
        <tbody>
          {syncLeft.map(f => (
            <tr key={f.date} className="h-[17px] leading-[17px] whitespace-pre text-[#008000]">
              <td className="p-0 pl-[5px]">{f.name}</td>
              <td className="p-0 pr-1 text-right">{f.size}</td>
              <td className="p-0 pl-1.5">{f.date}</td>
              <td className="p-0"><SmallArrow /></td>
              <td colSpan={4} />
            </tr>
          ))}
          {syncRight.map(f => (
            <tr key={f.date} className="h-[17px] leading-[17px] whitespace-pre text-[#000080]">
              <td colSpan={3} />
              <td className="p-0"><SmallArrow left /></td>
              <td className="p-0 pl-1.5">{f.date}</td>
              <td className="p-0 pr-1 text-right">{f.size}</td>
              <td className="p-0 pl-1.5">{f.name}</td>
              <td />
            </tr>
          ))}
        </tbody>
      </table>
    </div>
    <div className="flex h-[25px] items-center border-t border-[#808080] pl-[5px] text-white">
      8 файлов, 0 одинаковых, 0 разных, 4 только слева, 4 только справа
    </div>
  </div>
);

export default function App() {
  return (
    <div className="relative flex min-h-screen flex-col bg-[#191919] font-['Open_Sans','Noto_Sans',sans-serif] text-[11px] leading-4">
      <Gradients />

      <header className="flex h-[23px] items-center bg-[#2b2b2b] text-[#909090]">
        <span className="mr-[5px] ml-0.5 h-4 w-4"><PenIcon /></span>
        <h1 className="flex-1">EF Commander</h1>
        <button aria-label="Свернуть" className="flex h-full w-[45px] items-center justify-center">
          <svg viewBox="0 0 10 10" className="h-2.5 w-2.5"><path d="M0 5.500H10" stroke="#909090" /></svg>
        </button>
        <button aria-label="Восстановить" className="flex h-full w-[45px] items-center justify-center">
          <svg viewBox="0 0 10 10" className="h-2.5 w-2.5">
            <rect x="0.500" y="2.500" width="7" height="7" rx="1" fill="none" stroke="#909090" />
            <path d="M2.500 0.500H8Q9.500 0.500 9.500 2V7.500" fill="none" stroke="#909090" />
          </svg>
        </button>
        <button aria-label="Закрыть" className="flex h-full w-[50px] items-center justify-center">
          <svg viewBox="0 0 10 10" className="h-2.5 w-2.5"><path d="M0 0L10 10M10 0L0 10" stroke="#909090" /></svg>
        </button>
      </header>

      <nav aria-label="Меню" className="flex h-5 items-center gap-[27px] border-b border-white pr-3.5 pl-3 text-[#a0a0a0]">
        {menus.map(m => <button key={m}>{m}</button>)}
        <button className="ml-auto">Список задач</button>
        <button>Помощь</button>
      </nav>

      <div className="flex h-11 items-center border-b-2 border-[#e4e4e4]">
        {toolbar.map((group, i) => (
          <React.Fragment key={i}>
            {i > 0 && <span className="mr-[7px] ml-3 h-[38px] w-px bg-[#a8a8a8]" />}
            {group.map(({ label, icon: Pic }) => (
              <button key={label} aria-label={label} className="flex w-[41px] justify-center">
                <span className="h-8 w-8"><Pic /></span>
              </button>
            ))}
          </React.Fragment>
        ))}
      </div>

      <div className="grid grid-cols-2 border-b border-[#909090]">
        <DriveBar side="слева" />
        <DriveBar side="справа" />
      </div>

      <main className="flex flex-1 gap-1">
        <FilePanel
          folder="Posledniy.reys.Albatrosa.1971.DVDRip"
          type="AVI"
          files={leftFiles}
          selected
          total="4 файлы, 4 483 706 880 байтов"
        />
        <FilePanel
          folder="Последний рейс ''Альбатроса''"
          type="MKV"
          files={rightFiles}
          down
          total="4 файлы, 5 571 243 170 байтов"
        />
      </main>

      <footer className="font-['Liberation_Sans',sans-serif] text-white">
        <div className="flex h-[21px] items-center border border-[#707070]">
          <input
            aria-label="Командная строка"
            defaultValue="D:\Downloads\Posledniy.reys.Albatrosa.1971.DVDRip>"
            className="h-full min-w-0 flex-1 bg-transparent pl-0.5 outline-none"
          />
          <button aria-label="История" className="flex h-full w-[13px] items-center justify-center rounded-xs border border-[#9a9a9a] bg-[#383838]">
            <svg viewBox="0 0 10 6" className="h-1.5 w-2.5"><path d="M1 0.500L5 4.500L9 0.500" fill="none" stroke="#9a9a9a" /></svg>
          </button>
        </div>
        <div className="flex h-[23px]">
          {functionKeys.map(({ label, icon: Pic }) => (
            <button key={label} className="flex min-w-0 flex-1 items-center gap-0.5 pl-[3px] whitespace-nowrap">
              <span className="h-4 w-4 shrink-0"><Pic /></span>
              {label}
            </button>
          ))}
        </div>
        <div className="flex h-[25px] items-center border-t border-[#484848]">
          <span className="flex-1 pl-2">4 файлы, 4 483 706 880 байтов</span>
          <span className="flex h-full w-[106px] items-center border-l border-[#484848] pl-[5px] whitespace-nowrap">42,99 GB свободно</span>
          <span className="flex h-full w-[106px] items-center border-l border-[#484848] pl-[5px] whitespace-nowrap">RAM 50,59% своб...</span>
          <span className="flex h-full w-[66px] items-center border-l border-[#484848] pl-[5px]">17.06.23</span>
          <span className="flex h-full w-[52px] items-center border-l border-[#484848] pl-[5px]">20:26</span>
          <span className="h-full w-[25px] border-l border-[#484848]" />
          <span className="h-full w-11 border-l border-[#484848]" />
        </div>
      </footer>

      <SyncWindow />
    </div>
  );
}
